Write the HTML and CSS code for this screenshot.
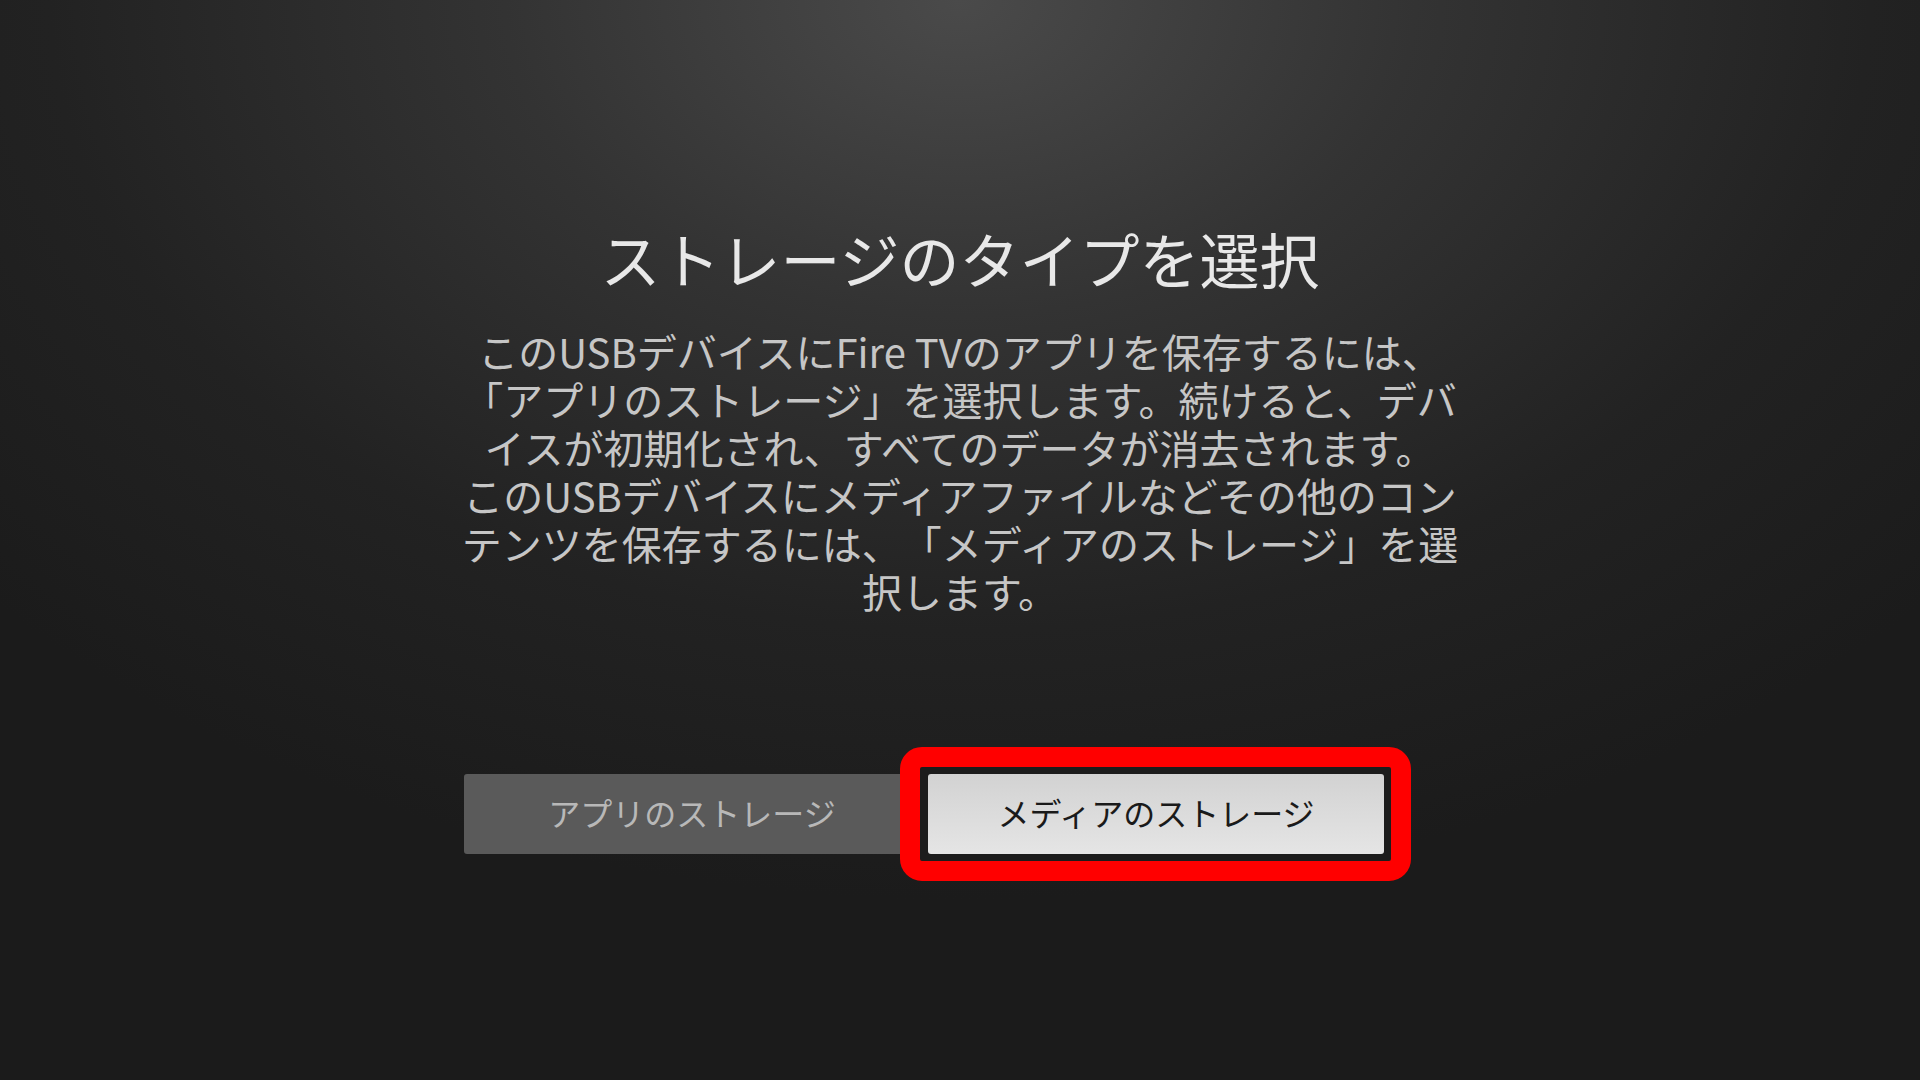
FILE: index.html
```html
<!DOCTYPE html>
<html lang="ja">
<head>
<meta charset="utf-8">
<title>ストレージのタイプを選択</title>
<link rel="stylesheet" href="styles.css">
</head>
<body>
<main class="screen">
  <h1 class="title">ストレージのタイプを選択</h1>
  <p class="desc">このUSBデバイスにFire TVのアプリを保存するには、<br>「アプリのストレージ」を選択します。続けると、デバ<br>イスが初期化され、すべてのデータが消去されます。<br>このUSBデバイスにメディアファイルなどその他のコン<br>テンツを保存するには、「メディアのストレージ」を選<br>択します。</p>
  <div class="actions">
    <div class="btn btn-dim">アプリのストレージ</div>
    <div class="focus-wrap">
      <div class="highlight"></div>
      <div class="btn btn-focus">メディアのストレージ</div>
    </div>
  </div>
</main>
</body>
</html>
```
FILE: styles.css
```css
html, body {
  margin: 0;
  padding: 0;
}
body {
  width: 1920px;
  height: 1080px;
  overflow: hidden;
  background: radial-gradient(ellipse 1300px 900px at 50% 0%, #4a4a4a 0%, #333 35%, #222 70%, #1b1b1b 100%);
  background-color: #1b1b1b;
  font-family: "Noto Sans CJK JP", "Noto Sans", sans-serif;
  text-spacing-trim: space-all;
}
.screen {
  display: flex;
  flex-direction: column;
  align-items: center;
  padding-top: 222px;
}
.title {
  margin: 0;
  font-size: 60px;
  line-height: 72px;
  font-weight: 400;
  color: #e8e8e8;
}
.desc {
  margin: 33px 0 0;
  width: 1000px;
  text-align: center;
  font-size: 40px;
  line-height: 48px;
  color: #c6c6c6;
  white-space: nowrap;
}
.actions {
  margin-top: 159px;
  width: 992px;
  display: flex;
  gap: 8px;
}
.btn {
  width: 456px;
  height: 80px;
  display: flex;
  align-items: center;
  justify-content: center;
  padding-bottom: 4px;
  font-size: 32px;
  border-radius: 3px;
  box-sizing: border-box;
}
.btn-dim {
  background: #5a5a5a;
  color: #b8b8b8;
}
.focus-wrap {
  position: relative;
}
.highlight {
  position: absolute;
  left: -28px;
  top: -27px;
  width: 511px;
  height: 134px;
  box-sizing: border-box;
  border: 20px solid #ff0000;
  border-radius: 22px;
  background: #1c1c1c;
}
.btn-focus {
  position: relative;
  background: linear-gradient(#d2d2d2, #e5e5e5);
  color: #1a1a1a;
}
```
